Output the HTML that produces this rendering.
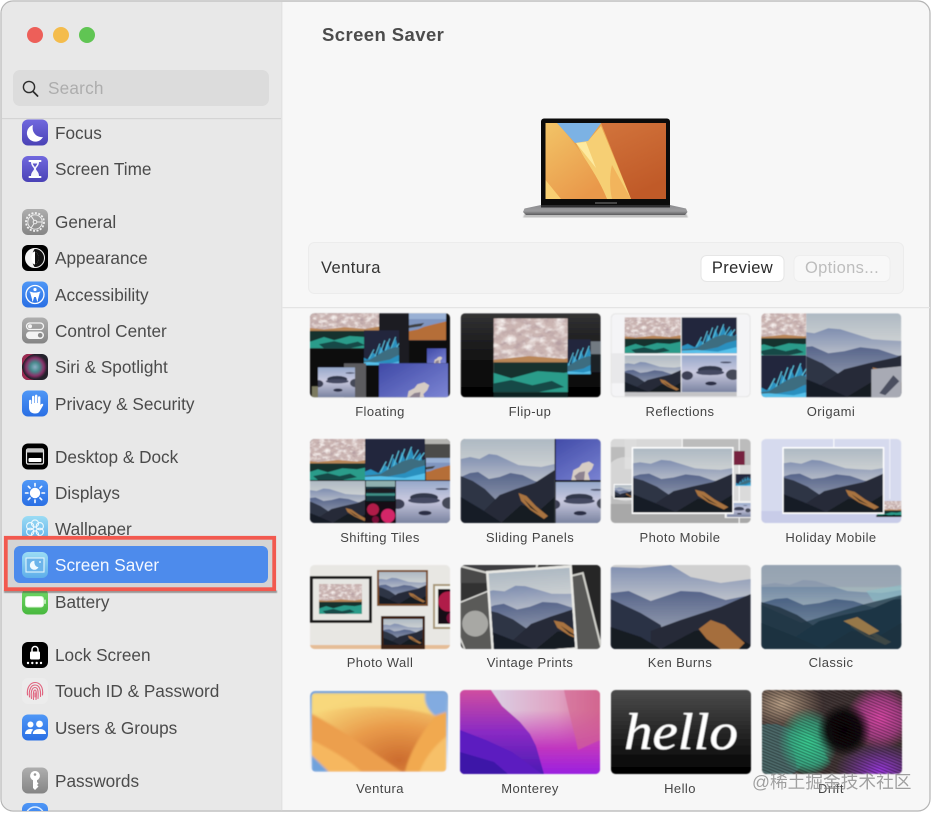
<!DOCTYPE html>
<html><head><meta charset="utf-8"><style>
html,body{margin:0;padding:0;background:#fff;width:934px;height:814px;overflow:hidden}
body{position:relative;font-family:"Liberation Sans","Noto Sans CJK SC",sans-serif}
svg.g{position:absolute;left:0;top:0}
.s{position:absolute;left:55px;height:24px;line-height:24px;font-size:17.2px;color:#4b4b4b;white-space:nowrap}
.t{position:absolute;width:150px;height:16px;line-height:16px;text-align:center;font-size:13px;letter-spacing:.42px;color:#454545;white-space:nowrap}
</style></head><body>
<svg class="g" width="934" height="814" viewBox="0 0 934 814" xmlns="http://www.w3.org/2000/svg">
<defs>
<linearGradient id="sky" x1="0" y1="0" x2="0" y2="1"><stop offset="0" stop-color="#aeb9c3"/><stop offset=".4" stop-color="#d2d5d5"/></linearGradient>
<linearGradient id="far" x1="0" y1="0" x2="0" y2="1"><stop offset="0" stop-color="#7f8eb0"/><stop offset=".42" stop-color="#bcc1cb"/></linearGradient>
<linearGradient id="midg" x1="0" y1="0" x2="0" y2="1"><stop offset="0" stop-color="#56648a"/><stop offset=".6" stop-color="#8c95aa"/></linearGradient>
<linearGradient id="seag" x1="0" y1="0" x2="0" y2="1"><stop offset="0" stop-color="#96a8ca"/><stop offset=".45" stop-color="#c9c9df"/><stop offset="1" stop-color="#7a83a0"/></linearGradient>
<linearGradient id="isg" x1="0" y1="0" x2="1" y2="1"><stop offset="0" stop-color="#3c46a4"/><stop offset="1" stop-color="#7f88d6"/></linearGradient>
<linearGradient id="flipbg" x1="0" y1="0" x2="0" y2="1"><stop offset="0" stop-color="#333335"/><stop offset=".6" stop-color="#0f0f0f"/><stop offset="1" stop-color="#030303"/></linearGradient>
<linearGradient id="hel" x1="0" y1="0" x2="0" y2="1"><stop offset="0" stop-color="#4c4c4c"/><stop offset="1" stop-color="#000"/></linearGradient>
<linearGradient id="sel" x1="0" y1="0" x2="0" y2="1"><stop offset="0" stop-color="#7ea6d8"/><stop offset="1" stop-color="#f8f8fa"/></linearGradient>
<radialGradient id="vt" cx=".65" cy=".85" r=".85"><stop offset="0" stop-color="#cc6c2e"/><stop offset=".5" stop-color="#e89a4a"/><stop offset="1" stop-color="#f7d478"/></radialGradient>
<linearGradient id="vp" x1="0" y1="0" x2=".6" y2="1"><stop offset="0" stop-color="#f2c467"/><stop offset="1" stop-color="#e9984a"/></linearGradient>
<linearGradient id="vo" x1="0" y1="0" x2=".4" y2="1"><stop offset="0" stop-color="#d2743c"/><stop offset="1" stop-color="#c05a28"/></linearGradient>
<linearGradient id="mo" x1="0" y1="0" x2="0" y2="1"><stop offset="0" stop-color="#d04ea0"/><stop offset=".5" stop-color="#8a2ac4"/><stop offset="1" stop-color="#4c1ab4"/></linearGradient>
<linearGradient id="mo2" x1="0" y1="0" x2="1" y2="0"><stop offset=".2" stop-color="#dbd2e6"/><stop offset=".7" stop-color="#e0a2c2"/><stop offset="1" stop-color="#cf6690"/></linearGradient>
<linearGradient id="mo3" x1="0" y1="0" x2="0" y2="1"><stop offset="0" stop-color="#c638b8" stop-opacity="0"/><stop offset=".6" stop-color="#c035c0"/><stop offset="1" stop-color="#9a20e0"/></linearGradient>
<linearGradient id="purp" x1="0" y1="0" x2="0" y2="1"><stop offset="0" stop-color="#7168de"/><stop offset="1" stop-color="#4a42b6"/></linearGradient>
<linearGradient id="grey" x1="0" y1="0" x2="0" y2="1"><stop offset="0" stop-color="#aeaeae"/><stop offset="1" stop-color="#858585"/></linearGradient>
<linearGradient id="blue" x1="0" y1="0" x2="0" y2="1"><stop offset="0" stop-color="#4f97f6"/><stop offset="1" stop-color="#2a6fe4"/></linearGradient>
<linearGradient id="lb" x1="0" y1="0" x2="0" y2="1"><stop offset="0" stop-color="#9bdcf4"/><stop offset="1" stop-color="#5eaeea"/></linearGradient>
<linearGradient id="gr" x1="0" y1="0" x2="0" y2="1"><stop offset="0" stop-color="#72d868"/><stop offset="1" stop-color="#48b83e"/></linearGradient>
<linearGradient id="base" x1="0" y1="0" x2="0" y2="1"><stop offset="0" stop-color="#8c8c8f"/><stop offset=".6" stop-color="#9c9c9e"/><stop offset="1" stop-color="#5c5c5e"/></linearGradient>
<radialGradient id="siri"><stop offset="0" stop-color="#8fb0c8"/><stop offset=".4" stop-color="#468a8c"/><stop offset=".75" stop-color="#8a2f68"/><stop offset="1" stop-color="#22222c"/></radialGradient>
<radialGradient id="dg"><stop offset="0" stop-color="#3fe0a0"/><stop offset=".6" stop-color="#3fc094" stop-opacity=".8"/><stop offset="1" stop-color="#3fc094" stop-opacity="0"/></radialGradient>
<radialGradient id="dp"><stop offset="0" stop-color="#f050b8"/><stop offset=".6" stop-color="#d04aa8" stop-opacity=".8"/><stop offset="1" stop-color="#e84ab0" stop-opacity="0"/></radialGradient>
<radialGradient id="dv"><stop offset="0" stop-color="#a83ef0"/><stop offset="1" stop-color="#9a3ae0" stop-opacity="0"/></radialGradient>
<radialGradient id="dt"><stop offset="0" stop-color="#d0b498"/><stop offset="1" stop-color="#c8a888" stop-opacity="0"/></radialGradient>
<radialGradient id="dk"><stop offset="0" stop-color="#0a0608"/><stop offset=".6" stop-color="#0a0608" stop-opacity=".92"/><stop offset="1" stop-color="#0a0608" stop-opacity="0"/></radialGradient>
<pattern id="st" width="3.6" height="2.8" patternUnits="userSpaceOnUse" patternTransform="rotate(22)"><rect width="3.6" height="1.3" fill="#000" fill-opacity=".5"/></pattern>
<filter id="b" x="-5%" y="-5%" width="110%" height="110%"><feGaussianBlur stdDeviation=".6"/></filter>
<filter id="b1" x="-5%" y="-5%" width="110%" height="110%"><feGaussianBlur stdDeviation="1.2"/></filter>
<filter id="txl" x="0" y="0" width="100%" height="100%"><feTurbulence type="fractalNoise" baseFrequency=".09 .14" numOctaves="3" seed="4"/><feColorMatrix values="0 0 0 0 .96  0 0 0 0 .92  0 0 0 0 .9  2.4 0 0 0 -1.05"/><feComposite in2="SourceGraphic" operator="in"/></filter>
<filter id="txd" x="0" y="0" width="100%" height="100%"><feTurbulence type="fractalNoise" baseFrequency=".11 .16" numOctaves="3" seed="11"/><feColorMatrix values="0 0 0 0 .46  0 0 0 0 .34  0 0 0 0 .36  2.4 0 0 0 -1.1"/><feComposite in2="SourceGraphic" operator="in"/></filter>
<clipPath id="c"><rect width="140" height="84" rx="4.5"/></clipPath>
<clipPath id="listclip"><rect x="0" y="119" width="281" height="692"/></clipPath>
<clipPath id="lscr"><rect x="545.5" y="123" width="120.5" height="76"/></clipPath>

<g id="m"><rect width="140" height="84" fill="url(#sky)"/>
<path d="M0 20L14 18 28 20 42 15 54 16 70 21 86 26 100 27 120 28 140 25V84H0Z" fill="url(#far)"/>
<path d="M0 38L14 34 26 33 42 40 58 38 74 34 92 36 110 42 124 44 140 40V84H0Z" fill="url(#midg)"/>
<path d="M0 37L18 42 36 50 54 62 60 84H0Z" fill="#2e3445"/>
<path d="M34 72L58 56 82 50 110 44 140 31V84H34Z" fill="#282c39"/>
<path d="M0 58L30 70 62 84H0Z" fill="#181b25"/><path d="M60 84L90 66 120 70 140 58V84Z" fill="#171a22"/>
<path d="M86 54L98 57 112 67 130 77 124 80 104 71 90 62Z" fill="#a8733f"/><path d="M94 60L108 69 116 74 104 69Z" fill="#3e3028"/></g>

<g id="sea"><rect width="140" height="84" fill="url(#seag)"/>
<ellipse cx="72" cy="33" rx="28" ry="9" fill="#33374b"/><ellipse cx="72" cy="39" rx="32" ry="6" fill="#444a62"/>
<ellipse cx="20" cy="46" rx="13" ry="10" fill="#3c4054"/><ellipse cx="124" cy="44" rx="16" ry="12" fill="#454958"/>
<ellipse cx="74" cy="64" rx="13" ry="4.500" fill="#2b2e44"/><ellipse cx="108" cy="16" rx="13" ry="2" fill="#474d66"/></g>

<g id="cl"><rect width="140" height="84" fill="#cbb5b2"/>
<rect width="140" height="48" fill="#fff" filter="url(#txd)"/><rect width="140" height="48" fill="#fff" filter="url(#txl)"/>
<path d="M0 44L30 47 70 43 110 46 140 41V52H0Z" fill="#b98656"/>
<rect y="50" width="140" height="34" fill="#14302f"/>
<path d="M0 72L30 62 50 68 80 60 110 62 140 56V84H0Z" fill="#2b9c8a"/><path d="M20 76L50 70 74 76 96 71 110 78 80 84H30Z" fill="#174a47"/></g>

<g id="cy"><rect width="140" height="84" fill="#20263e"/>
<path d="M0 84V70L20 62 36 70 50 54 60 62 66 38 76 52 84 26 92 46 104 20 110 42 122 28 126 46 140 34V84Z" fill="#2a90bf"/>
<path d="M40 68L52 46M54 64L66 32M66 58L78 24M78 52L90 20M90 50L104 16M102 48L118 22M114 50L130 28" stroke="#5fc4df" stroke-width="2.2"/>
<path d="M0 84V76L40 72 66 56 84 46 104 40 120 44 140 42V52L110 60 90 70 50 78 36 84Z" fill="#3d6d80"/>
<path d="M0 78L40 76 90 80 140 68V84H0Z" fill="#55c0ea"/></g>

<g id="is"><rect width="140" height="84" fill="url(#isg)"/>
<path d="M56 84L60 64 72 58 78 50 92 46 102 52 98 62 90 70 94 84Z" fill="#d6ccc4"/><path d="M62 76L72 68 84 66 82 84H66Z" fill="#8d8290"/></g>

<g id="co"><rect width="140" height="84" fill="#7f95bf"/><rect width="140" height="18" fill="#99b0d4"/>
<path d="M0 84V58L40 50 60 42 90 34 140 22V84Z" fill="#b56e38"/><path d="M0 40L30 34 60 30 50 40 10 46Z" fill="#3f3f3f"/></g>

<g id="fl"><rect width="140" height="84" fill="#181018"/><circle cx="40" cy="30" r="24" fill="#b01c48"/><circle cx="100" cy="55" r="28" fill="#d42868"/><circle cx="50" cy="70" r="14" fill="#7a1038"/></g>
<g id="te"><rect width="140" height="84" fill="#17343c"/><rect width="140" height="24" fill="#8fb0b0"/><ellipse cx="70" cy="40" rx="70" ry="10" fill="#1a1a22"/><rect y="52" width="140" height="10" fill="#3f8f86"/></g>

<g id="ken"><rect width="140" height="84" fill="#d0d0d0"/>
<path d="M0 2L30 3 60 0 80 12 110 18 140 14V84H0Z" fill="url(#far)"/>
<path d="M0 28L18 26 40 36 70 26 90 27 115 35 140 30V84H0Z" fill="url(#midg)"/>
<path d="M0 34L30 48 50 60 56 84H0Z" fill="#2c3244"/>
<path d="M40 66L70 55 110 42 140 29V84H40Z" fill="#272b38"/>
<path d="M0 62L30 72 50 84H0Z" fill="#171a24"/><path d="M50 84L84 66 110 62 140 80V84Z" fill="#181a22"/>
<path d="M88 64L100 55 114 60 134 78 128 84 110 84 96 74Z" fill="#a56e3c"/></g>

<g id="ven"><rect width="140" height="84" fill="url(#vt)"/>
<path d="M0 0H120C116 8 120 18 128 24 90 12 40 12 0 22Z" fill="#f7d87c" opacity=".8"/>
<path d="M0 22C30 38 62 62 94 84H0Z" fill="#ec9f4e"/>
<path d="M0 50C20 60 40 72 52 84H0Z" fill="#f6b75e"/>
<path d="M97 84C102 60 120 32 140 12V84Z" fill="#f1a94f"/>
<path d="M112 84C118 68 128 56 140 46V84Z" fill="#f7c068"/>
<path d="M118 0H140V20L128 24C120 18 116 8 118 0Z" fill="#82abe0"/>
<path d="M0 66L18 84H0Z" fill="#6fa2dc"/></g>
</defs>

<!-- window -->
<rect x="1" y="1" width="929" height="810" rx="12" fill="#f7f7f7" stroke="#b4b4b4" stroke-width="1.2"/>
<path d="M13 1.6H281.5V810.4H13A12 12 0 0 1 1.6 798V13A12 12 0 0 1 13 1.6Z" fill="#e8e8e8"/>
<rect x="281" y="2" width="1.4" height="808.6" fill="#e2e2e2"/>
<circle cx="35" cy="35" r="8" fill="#ed5f59"/><circle cx="61" cy="35" r="8" fill="#f4bc4c"/><circle cx="87" cy="35" r="8" fill="#60c553"/>
<rect x="13" y="70" width="256" height="36" rx="7" fill="#dcdcdc"/>
<circle cx="29" cy="87" r="5.6" fill="none" stroke="#2c2c2c" stroke-width="1.4"/><path d="M33 91.4L37.6 96" stroke="#2c2c2c" stroke-width="1.7" stroke-linecap="round"/>
<rect x="2" y="118" width="279" height="1.2" fill="#d4d4d4"/>

<!-- sidebar icons -->
<g clip-path="url(#listclip)">
<g transform="translate(22 119.5)"><rect width="26" height="26" rx="6" fill="url(#purp)"/><path d="M11 5.500A8.500 8.500 0 1 0 21 17.500C15 18.500 9 13 11 5.500Z" fill="#fff"/></g>
<g transform="translate(22 156)"><rect width="26" height="26" rx="6" fill="url(#purp)"/><path d="M7.500 5H18.500M7.500 21H18.500" stroke="#fff" stroke-width="2" stroke-linecap="round"/><path d="M9 6C9 10 12 11.500 12 13S9 16 9 20H17C17 16 14 14.500 14 13S17 10 17 6Z" fill="#fff" fill-opacity=".95"/><path d="M10.800 7.500H15.200C14.800 9.500 13 10.500 13 11.500 13 10.500 11.200 9.500 10.800 7.500Z" fill="#5a52c6"/></g>
<g transform="translate(22 209)"><rect width="26" height="26" rx="6" fill="url(#grey)"/><circle cx="13" cy="13" r="9" fill="none" stroke="#f2f2f2" stroke-width="1.800" stroke-dasharray="2 1.500"/><circle cx="13" cy="13" r="7.200" fill="none" stroke="#eee" stroke-width=".9"/><circle cx="13" cy="13" r="1.800" fill="none" stroke="#eee"/><path d="M14.800 13H20M12 11.500L9 6.800M12 14.500L9 19.200" stroke="#eee" stroke-width="1"/></g>
<g transform="translate(22 245)"><rect width="26" height="26" rx="6" fill="#000"/><circle cx="13" cy="13" r="9.500" fill="#111" stroke="#f4f4f4" stroke-width="1"/><path d="M13 3.500A9.500 9.500 0 0 0 13 22.500C9 18 9 8 13 3.500Z" fill="#f4f4f4"/><path d="M9 13C9 9 11 6.500 13 6.500V19.500C11 19.500 9 17 9 13Z" fill="#f4f4f4"/><ellipse cx="13" cy="13" rx="3.600" ry="6" fill="#fff"/><path d="M13 7A3.600 6 0 0 1 13 19Z" fill="#111"/></g>
<g transform="translate(22 281.500)"><rect width="26" height="26" rx="6" fill="url(#blue)"/><circle cx="13" cy="13" r="9" fill="none" stroke="#fff" stroke-width="1.300"/><circle cx="13" cy="8" r="1.600" fill="#fff"/><path d="M8 10.500L11.800 11.500V15L10.500 19.500M18 10.500L14.200 11.500V15L15.500 19.500M11.800 11.500H14.200V15H11.800Z" fill="#fff" stroke="#fff" stroke-width=".9" stroke-linecap="round" stroke-linejoin="round"/></g>
<g transform="translate(22 317.500)"><rect width="26" height="26" rx="6" fill="url(#grey)"/><rect x="4.500" y="5.500" width="17" height="6.500" rx="3.250" fill="none" stroke="#f4f4f4" stroke-width="1.300"/><circle cx="8" cy="8.750" r="2" fill="#f4f4f4"/><rect x="4" y="14" width="18" height="7.500" rx="3.750" fill="#f4f4f4"/><circle cx="18.200" cy="17.750" r="2.300" fill="#8a8a8a"/></g>
<g transform="translate(22 354)"><rect width="26" height="26" rx="6" fill="#25222c"/><circle cx="13" cy="13" r="12" fill="url(#siri)" filter="url(#b)"/><path d="M0 12C3 3 8 1 12 0H6A6 6 0 0 0 0 6ZM0 14C2 22 6 25 12 26H6A6 6 0 0 1 0 20Z" fill="#9c2a52"/></g>
<g transform="translate(22 390.500)"><rect width="26" height="26" rx="6" fill="url(#blue)"/><path d="M7 10.500A1.200 1.200 0 0 1 9.400 10.500V13.500H10V6.500A1.200 1.200 0 0 1 12.400 6.500V12.500H13V5.300A1.200 1.200 0 0 1 15.400 5.300V12.500H16V7A1.200 1.200 0 0 1 18.400 7V14.500L19 13.800C20 12.500 22 13.500 21 15L17.500 21C16.500 22.500 15 23 13 23 9 23 7 20.500 7 17Z" fill="#fff"/></g>
<g transform="translate(22 443.500)"><rect width="26" height="26" rx="6" fill="#000"/><rect x="4.500" y="5.500" width="17" height="15" rx="1.500" fill="none" stroke="#eee" stroke-width="1.200"/><rect x="4.500" y="5.500" width="17" height="3.500" fill="#c8c8c8"/><rect x="6.500" y="14.500" width="13" height="4" rx="1" fill="#fff"/></g>
<g transform="translate(22 480)"><rect width="26" height="26" rx="6" fill="url(#blue)"/><circle cx="13" cy="13" r="5.200" fill="#fff"/><path d="M13 3.500V6M13 20V22.500M3.500 13H6M20 13H22.500M6.300 6.300L8 8M18 18L19.700 19.700M6.300 19.700L8 18M18 8L19.700 6.300" stroke="#fff" stroke-width="1.600" stroke-linecap="round"/></g>
<g transform="translate(22 516)"><rect width="26" height="26" rx="6" fill="url(#lb)"/><g fill="none" stroke="#eef9fe" stroke-width="1.100"><circle cx="13" cy="7.500" r="3.600"/><circle cx="13" cy="18.500" r="3.600"/><circle cx="8.200" cy="10.200" r="3.600"/><circle cx="17.800" cy="10.200" r="3.600"/><circle cx="8.200" cy="15.800" r="3.600"/><circle cx="17.800" cy="15.800" r="3.600"/><circle cx="13" cy="13" r="2"/></g></g>
<g transform="translate(22 588.500)"><rect width="26" height="26" rx="6" fill="url(#gr)"/><rect x="3.500" y="8" width="18" height="10.500" rx="2.500" fill="#fff" stroke="#d8f5d4"/><rect x="22.300" y="11" width="1.400" height="4.500" rx=".7" fill="#e6fae2"/></g>
<g transform="translate(22 642)"><rect width="26" height="26" rx="6" fill="#000"/><path d="M10 9.500V7.500A3 3 0 0 1 16 7.500V9.500" fill="none" stroke="#fff" stroke-width="1.500"/><rect x="8" y="9.500" width="10" height="8" rx="1.200" fill="#fff"/><g fill="#fff"><circle cx="6" cy="21" r="1.200"/><circle cx="10.300" cy="21" r="1.200"/><circle cx="14.700" cy="21" r="1.200"/><circle cx="19" cy="21" r="1.200"/></g></g>
<g transform="translate(22 678)"><rect width="26" height="26" rx="6" fill="#ececec"/><g fill="none" stroke="#e0607c" stroke-width="1.100" stroke-linecap="round"><path d="M5.500 17C4.500 10 8 4.500 13 4.500S21.500 9 20.500 17"/><path d="M7.500 19C6.500 12 9 7 13 7S19 11 18.500 18.500"/><path d="M9.500 20.500C8.500 14 10 9.500 13 9.500S16.500 13 16 20.500"/><path d="M11.500 21.500C11 16 11.500 12 13 12S14.500 16 14 21.500"/><path d="M13 15V19"/></g></g>
<g transform="translate(22 714.500)"><rect width="26" height="26" rx="6" fill="url(#blue)"/><g fill="#fff"><circle cx="8.500" cy="10" r="3"/><circle cx="17.500" cy="9.500" r="3.400"/><path d="M3 19.500C3 16 6 14.500 8.500 14.500 9.500 14.500 10.500 14.800 11.200 15.200 9.800 16.300 9.200 17.700 9.200 19.500Z"/><path d="M10.800 19.500C10.800 16 14 14.500 17.500 14.500S24 16 24 19.500Z"/></g></g>
<g transform="translate(22 767.500)"><rect width="26" height="26" rx="6" fill="url(#grey)"/><path d="M13 3.500A4.800 4.800 0 0 1 15 12.700V14.500L16.500 16 15 17.500 16.500 19 13 22.500 11 20.500V12.700A4.800 4.800 0 0 1 13 3.500Z" fill="#fff"/><circle cx="13" cy="7" r="1.300" fill="#999"/></g>
<g transform="translate(22 803)"><rect width="26" height="26" rx="6" fill="url(#blue)"/><circle cx="13" cy="13" r="9" fill="none" stroke="#dfeeff" stroke-width="1.400"/></g>
</g>

<!-- highlight -->
<rect x="6" y="538" width="268" height="51" fill="#d4d4d4"/>
<rect x="4" y="590.500" width="273" height="2.500" fill="#444" opacity=".5" filter="url(#b)"/>
<rect x="5.800" y="537.800" width="268.400" height="51.400" fill="none" stroke="#f2594f" stroke-width="3.800"/>
<rect x="14" y="546" width="254" height="37" rx="6" fill="#4d8bec"/>
<g transform="translate(22 552)"><rect width="26" height="26" rx="6" fill="url(#lb)"/><rect x="4" y="6" width="18" height="14" fill="#6cb4ea" stroke="#e2f5fd" stroke-width="1.100"/><path d="M12.500 8.800A4.500 4.500 0 1 0 16.500 15C13.800 15.300 11.800 12.300 12.500 8.800Z" fill="#f0faff"/><circle cx="18" cy="10" r=".9" fill="#fff"/></g>

<!-- laptop -->
<path d="M525 213H686L688 217.500H523Z" fill="#9a9a9a" opacity=".6" filter="url(#b)"/>
<path d="M544 118.500H667A3 3 0 0 1 670 121.500V206H541V121.500A3 3 0 0 1 544 118.500Z" fill="#0b0b0b"/>
<g clip-path="url(#lscr)">
<rect x="545.500" y="123" width="121" height="76" fill="#e9a34f"/>
<path d="M601 123H666V199H631Z" fill="url(#vo)"/>
<path d="M570 132L588 141 601 126 631 199H607Z" fill="#f6cf74"/>
<path d="M612 165L631 199H612C609 186 610 173 612 165Z" fill="#f2b45c"/>
<path d="M545.500 123H557C572 138 598 175 607 199H545.500Z" fill="url(#vp)"/>
<path d="M545.500 180L561 199H545.500Z" fill="#f8cf72"/>
<path d="M557 123H601L588 141 575 143Z" fill="#7cb2e4"/>
<path d="M576 143L586 142 596 168Z" fill="#fdeaa0"/>
</g>
<rect x="595" y="202" width="22" height="2" fill="#444"/>
<path d="M541 205H670L686 208.500 687.500 212 685 215H526L523 212 524.500 208.500Z" fill="url(#base)"/>
<rect x="541" y="205" width="129" height="2.500" fill="#2e2e30"/>

<!-- options panel -->
<rect x="308.500" y="242.500" width="595" height="51" rx="6" fill="#f3f3f3" stroke="#ececec"/>
<rect x="701" y="255.500" width="83" height="26" rx="5.500" fill="#fff" stroke="#e6e6e6"/>
<rect x="794" y="255.500" width="96" height="26" rx="5.500" fill="#f8f8f8" stroke="#eeeeee"/>
<rect x="282.400" y="307" width="647.600" height="1.300" fill="#e4e4e4"/>

<!-- thumbs -->
<g filter="url(#b)">
<!-- Floating -->
<svg x="310" y="313.300" width="140" height="84" viewBox="0 0 140 84"><g clip-path="url(#c)"><rect width="140" height="84" fill="#08080a"/><rect x="69" width="30" height="60" fill="#1b1b20"/>
<svg x="0" y="-8" width="69" height="43" viewBox="0 0 140 84" preserveAspectRatio="xMidYMid slice"><use href="#cl"/></svg>
<svg x="99" y="0" width="37" height="27" viewBox="0 0 140 84" preserveAspectRatio="xMidYMid slice"><use href="#co"/></svg>
<svg x="54" y="17" width="35" height="35" viewBox="0 0 140 84" preserveAspectRatio="xMidYMid slice"><use href="#cy"/></svg>
<svg x="117" y="35" width="19" height="15" viewBox="0 0 140 84" preserveAspectRatio="xMidYMid slice"><use href="#is"/></svg>
<rect x="34" y="50" width="22" height="34" fill="#5b5b5f"/>
<svg x="8" y="54" width="37" height="30" viewBox="0 0 140 84" preserveAspectRatio="xMidYMid slice"><use href="#sea"/></svg>
<rect x="2" y="73" width="6" height="11" fill="#7c7a5e"/>
<svg x="69" y="50" width="69" height="34" viewBox="0 0 140 84" preserveAspectRatio="xMidYMid slice"><use href="#is"/></svg>
</g></svg>
<!-- Flip-up -->
<svg x="460.700" y="313.300" width="140" height="84" viewBox="0 0 140 84"><g clip-path="url(#c)"><rect width="140" height="84" fill="url(#flipbg)"/>
<svg x="33" y="5" width="74" height="74" viewBox="30 0 84 84" preserveAspectRatio="none"><use href="#cl"/></svg>
<rect x="33" y="79" width="74" height="5" fill="#0d2422"/>
<svg x="107" y="26" width="23" height="35" viewBox="50 0 60 84" preserveAspectRatio="xMidYMid slice"><use href="#cy"/></svg>
<rect x="130" y="28" width="10" height="13" fill="#727a82"/><rect x="130" y="41" width="10" height="18" fill="#1f2126"/>
</g></svg>
<!-- Reflections -->
<svg x="610.700" y="313.300" width="140" height="84" viewBox="0 0 140 84"><g clip-path="url(#c)"><rect width="140" height="84" fill="#f4f4f6"/><rect x="0" y="40" width="14" height="30" fill="#e8e8ea"/>
<svg x="14" y="4" width="56" height="36" viewBox="0 0 140 84" preserveAspectRatio="xMidYMid slice"><use href="#cl"/></svg>
<svg x="71" y="4" width="55" height="36" viewBox="0 0 140 84" preserveAspectRatio="xMidYMid slice"><use href="#cy"/></svg>
<svg x="14" y="42" width="56" height="37" viewBox="0 0 140 84" preserveAspectRatio="xMidYMid slice"><use href="#m"/></svg>
<svg x="71" y="42" width="55" height="37" viewBox="0 0 140 84" preserveAspectRatio="xMidYMid slice"><use href="#sea"/></svg>
<rect x="14" y="79" width="112" height="5" fill="#c4c4c6"/>
</g><rect x=".5" y=".5" width="139" height="83" rx="4.500" fill="none" stroke="#e4e4e4"/></svg>
<!-- Origami -->
<svg x="761.300" y="313.300" width="140" height="84" viewBox="0 0 140 84"><g clip-path="url(#c)">
<svg x="0" y="0" width="45" height="42" viewBox="0 0 140 84" preserveAspectRatio="xMidYMid slice"><use href="#cl"/></svg>
<svg x="0" y="42" width="45" height="42" viewBox="0 0 140 84" preserveAspectRatio="xMidYMid slice"><use href="#cy"/></svg>
<svg x="45" y="0" width="95" height="84" viewBox="20 0 95 84" preserveAspectRatio="xMidYMid slice"><use href="#m"/></svg>
<path d="M110 56L140 53V84H110Z" fill="#a8aab4"/><path d="M118 80L132 62 138 68 124 82Z" fill="#4c5060"/>
</g></svg>
<!-- Shifting Tiles -->
<svg x="310" y="439" width="140" height="84" viewBox="0 0 140 84"><g clip-path="url(#c)"><rect width="140" height="84" fill="#0c0c0e"/>
<svg x="0" y="0" width="55" height="41" viewBox="0 0 140 84" preserveAspectRatio="xMidYMid slice"><use href="#cl"/></svg>
<svg x="55" y="0" width="60" height="41" viewBox="0 0 140 84" preserveAspectRatio="xMidYMid slice"><use href="#cy"/></svg>
<rect x="115" width="25" height="19" fill="#4c4c48"/><rect x="115" width="25" height="5" fill="#b4b4b0"/>
<svg x="116" y="19" width="24" height="22" viewBox="0 0 140 84" preserveAspectRatio="xMidYMid slice"><use href="#co"/></svg>
<svg x="0" y="42" width="55" height="42" viewBox="0 0 140 84" preserveAspectRatio="xMidYMid slice"><use href="#m"/></svg>
<svg x="56" y="42" width="29" height="20" viewBox="0 0 140 84" preserveAspectRatio="xMidYMid slice"><use href="#te"/></svg>
<svg x="56" y="63" width="29" height="21" viewBox="0 0 140 84" preserveAspectRatio="xMidYMid slice"><use href="#fl"/></svg>
<svg x="86" y="42" width="54" height="42" viewBox="0 0 140 84" preserveAspectRatio="xMidYMid slice"><use href="#sea"/></svg>
</g></svg>
<!-- Sliding Panels -->
<svg x="460.700" y="439" width="140" height="84" viewBox="0 0 140 84"><g clip-path="url(#c)"><rect width="140" height="84" fill="#0c0c0e"/>
<svg x="0" y="0" width="94" height="84" viewBox="0 0 140 84" preserveAspectRatio="none"><use href="#m"/></svg>
<svg x="95" y="0" width="45" height="41" viewBox="0 0 140 84" preserveAspectRatio="xMidYMid slice"><use href="#is"/></svg>
<svg x="95" y="43" width="45" height="41" viewBox="0 0 140 84" preserveAspectRatio="xMidYMid slice"><use href="#sea"/></svg>
</g></svg>
<!-- Photo Mobile -->
<svg x="610.700" y="439" width="140" height="84" viewBox="0 0 140 84"><g clip-path="url(#c)"><rect width="140" height="84" fill="#bcbcbc"/><rect width="71" height="8" fill="#d8d8d8"/><rect x="14" width="12" height="30" fill="#dcdcdc"/><ellipse cx="15" cy="40" rx="22" ry="22" fill="#e0e0e0" opacity=".7"/><rect y="65" width="140" height="19" fill="#a8a8a8"/><rect x="122" y="26" width="18" height="40" fill="#dadada"/><rect x="71" y="0" width="1" height="8" fill="#fff"/><rect x="128" width="1" height="84" fill="#fff"/>
<rect x="3" y="45" width="18" height="15" fill="#fff"/><svg x="4" y="46" width="17" height="13" viewBox="0 0 140 84" preserveAspectRatio="xMidYMid slice"><use href="#m"/></svg>
<rect x="123" y="12" width="11" height="14" fill="#77223f"/>
<svg x="125" y="35" width="15" height="12" viewBox="0 0 140 84" preserveAspectRatio="xMidYMid slice"><use href="#cy"/></svg>
<rect x="114" y="62" width="26" height="17" fill="#f2f2f2"/><svg x="116" y="64" width="24" height="14" viewBox="0 0 140 84" preserveAspectRatio="xMidYMid slice"><use href="#sea"/></svg>
<rect x="21" y="8" width="102" height="67" fill="#fff"/><svg x="22.500" y="9.500" width="99" height="64" viewBox="0 0 140 84" preserveAspectRatio="xMidYMid slice"><use href="#m"/></svg>
</g></svg>
<!-- Holiday Mobile -->
<svg x="761.300" y="439" width="140" height="84" viewBox="0 0 140 84"><g clip-path="url(#c)"><rect width="140" height="84" fill="#d6daee"/><rect x="72" width="1" height="8" fill="#fff"/><rect x="128" width="1" height="60" fill="#f2f2fa"/><rect y="72" width="140" height="12" fill="#c8cce8"/>
<svg x="116" y="62" width="24" height="16" viewBox="0 0 140 84" preserveAspectRatio="xMidYMid slice"><use href="#cl"/></svg><rect x="115" y="76" width="25" height="2" fill="#111"/>
<rect x="21" y="8" width="102" height="67" fill="#fff"/><svg x="22.500" y="9.500" width="99" height="64" viewBox="0 0 140 84" preserveAspectRatio="xMidYMid slice"><use href="#m"/></svg>
</g></svg>
<!-- Photo Wall -->
<svg x="310" y="565" width="140" height="84" viewBox="0 0 140 84"><g clip-path="url(#c)"><rect width="140" height="84" fill="#e8e7e3"/><rect y="80" width="140" height="4" fill="#e5bd97"/>
<rect x="0" y="11" width="62" height="47" fill="#1c1c1e"/><rect x="3" y="14" width="56" height="41" fill="#e6e6e2"/>
<svg x="9" y="19" width="43" height="30" viewBox="0 0 140 84" preserveAspectRatio="xMidYMid slice"><use href="#cl"/></svg>
<rect x="67" y="5" width="51" height="36" fill="#7a4e2c"/><svg x="69" y="7" width="47" height="32" viewBox="0 0 140 84" preserveAspectRatio="xMidYMid slice"><use href="#m"/></svg>
<rect x="71" y="51" width="44" height="33" fill="#3c2416"/><svg x="73.500" y="54" width="39" height="26" viewBox="0 0 140 84" preserveAspectRatio="xMidYMid slice"><use href="#m"/></svg>
<rect x="123" y="19" width="17" height="45" fill="#a89878"/><rect x="125" y="21" width="15" height="41" fill="#f0f0ea"/><svg x="128" y="24" width="12" height="35" viewBox="0 0 60 84" preserveAspectRatio="xMidYMid slice"><use href="#fl"/></svg>
</g></svg>
<!-- Vintage Prints -->
<svg x="460.700" y="565" width="140" height="84" viewBox="0 0 140 84"><g clip-path="url(#c)"><rect width="140" height="84" fill="#333"/><rect x="110" width="30" height="84" fill="#282828"/><rect width="50" height="18" fill="#484848"/>
<g transform="rotate(-22 25 50)"><rect x="-8" y="28" width="52" height="58" fill="#d6d6d2"/><rect x="-6.500" y="29.500" width="49" height="55" fill="#5a5a58"/><circle cx="12" cy="54" r="13" fill="#a8a8a4"/></g>
<g transform="rotate(14 70 30)"><rect x="-10" y="-30" width="80" height="50" fill="#cfcfcb"/><rect x="-8" y="-28" width="76" height="46" fill="#3e3e40"/></g>
<g transform="rotate(-14 115 50)"><rect x="95" y="10" width="38" height="86" fill="#cfcfc9"/><rect x="97" y="12" width="34" height="82" fill="#595956"/></g>
<g transform="rotate(-4 70 44)"><rect x="28" y="3" width="86" height="84" fill="#e8e8e4"/><svg x="30.500" y="5.500" width="81" height="80" viewBox="10 0 100 84" preserveAspectRatio="none"><use href="#m"/></svg></g>
</g></svg>
<!-- Ken Burns -->
<svg x="610.700" y="565" width="140" height="84" viewBox="0 0 140 84"><g clip-path="url(#c)"><use href="#ken"/></g></svg>
<!-- Classic -->
<svg x="761.300" y="565" width="140" height="84" viewBox="0 0 140 84"><g clip-path="url(#c)"><use href="#m"/><rect width="140" height="84" fill="#1f5a6e" opacity=".22"/><path d="M0 0H140V22H0Z" fill="#98a2b2" opacity=".7"/><path d="M105 26L140 20V34L112 36Z" fill="#8cc0c8" opacity=".6"/><path d="M0 40L40 58 100 40 140 30V84H0Z" fill="#1c3644" opacity=".7"/><path d="M82 56L96 52 118 66 108 70Z" fill="#97784a"/></g></svg>
<!-- Ventura -->
<svg x="309" y="690" width="141" height="84.500" viewBox="0 0 141 84.500"><rect x="1" y="1" width="138" height="82.500" rx="5" fill="url(#sel)"/><svg x="2.500" y="3" width="135" height="79" viewBox="0 0 140 84" preserveAspectRatio="none"><g clip-path="url(#c)"><g filter="url(#b1)"><use href="#ven"/></g></g></svg></svg>
<!-- Monterey -->
<svg x="460" y="690" width="140" height="84" viewBox="0 0 140 84"><g clip-path="url(#c)"><rect width="140" height="84" fill="url(#mo2)"/><rect y="20" width="140" height="64" fill="url(#mo3)"/>
<path d="M104 0H140V50L118 60C114 40 108 20 104 0Z" fill="#d4658f" opacity=".6"/>
<path d="M0 0H31L42 16 60 32 70 44 76 56 84 84H0Z" fill="url(#mo)"/>
<path d="M0 40L26 50 52 62 82 84H0Z" fill="#5c1ec0"/><path d="M0 62L34 72 48 84H0Z" fill="#3d18a8"/></g></svg>
<!-- Hello -->
<svg x="611" y="690" width="140" height="84" viewBox="0 0 140 84"><g clip-path="url(#c)"><rect width="140" height="84" fill="url(#hel)"/><text x="70" y="59" text-anchor="middle" font-family="Liberation Serif" font-style="italic" font-size="52" fill="#fff" stroke="#fff" stroke-width=".3" textLength="114" lengthAdjust="spacingAndGlyphs">hello</text></g></svg>
<!-- Drift -->
<svg x="762" y="690" width="140" height="84" viewBox="0 0 140 84"><g clip-path="url(#c)"><rect width="140" height="84" fill="#4a3c3c"/>
<ellipse cx="20" cy="14" rx="42" ry="28" fill="url(#dt)"/><ellipse cx="8" cy="62" rx="36" ry="28" fill="#557474"/><path d="M18 36C34 30 50 42 58 56 66 68 72 78 76 84H34C36 64 28 50 18 36Z" fill="url(#dg)"/><ellipse cx="46" cy="52" rx="30" ry="34" fill="url(#dg)"/><ellipse cx="118" cy="28" rx="34" ry="32" fill="url(#dp)"/><ellipse cx="118" cy="80" rx="45" ry="28" fill="url(#dv)"/>
<ellipse cx="82" cy="40" rx="27" ry="27" fill="url(#dk)"/>
<rect width="140" height="84" fill="url(#st)"/></g></svg>
</g>
</svg>

<div class="s" style="left:48px;top:76px;color:#adadad;letter-spacing:.2px">Search</div>
<div class="s" style="top:121px">Focus</div>
<div class="s" style="top:157px">Screen Time</div>
<div class="s" style="top:210px">General</div>
<div class="s" style="top:246px">Appearance</div>
<div class="s" style="top:283px">Accessibility</div>
<div class="s" style="top:319px">Control Center</div>
<div class="s" style="top:355px">Siri &amp; Spotlight</div>
<div class="s" style="top:392px">Privacy &amp; Security</div>
<div class="s" style="top:445px">Desktop &amp; Dock</div>
<div class="s" style="top:481px">Displays</div>
<div class="s" style="top:517px;height:19px;overflow:hidden">Wallpaper</div>
<div class="s" style="top:553px;color:#f4f8ff">Screen Saver</div>
<div class="s" style="top:590px">Battery</div>
<div class="s" style="top:643px">Lock Screen</div>
<div class="s" style="top:679px">Touch ID &amp; Password</div>
<div class="s" style="top:716px">Users &amp; Groups</div>
<div class="s" style="top:769px">Passwords</div>

<div style="position:absolute;left:322px;top:23px;height:24px;line-height:24px;font-size:18.5px;font-weight:bold;color:#4c4c4c;letter-spacing:.42px">Screen Saver</div>
<div style="position:absolute;left:321px;top:256px;height:24px;line-height:24px;font-size:16.5px;color:#333;letter-spacing:.42px">Ventura</div>
<div style="position:absolute;left:701px;top:256px;width:83px;text-align:center;height:24px;line-height:24px;font-size:16.5px;color:#2a2a2a;letter-spacing:.35px">Preview</div>
<div style="position:absolute;left:794px;top:256px;width:96px;text-align:center;height:24px;line-height:24px;font-size:16.5px;color:#bdbdbd;letter-spacing:.35px">Options...</div>

<div class="t" style="left:305px;top:404px">Floating</div>
<div class="t" style="left:455px;top:404px">Flip-up</div>
<div class="t" style="left:605px;top:404px">Reflections</div>
<div class="t" style="left:756px;top:404px">Origami</div>
<div class="t" style="left:305px;top:530px">Shifting Tiles</div>
<div class="t" style="left:455px;top:530px">Sliding Panels</div>
<div class="t" style="left:605px;top:530px">Photo Mobile</div>
<div class="t" style="left:756px;top:530px">Holiday Mobile</div>
<div class="t" style="left:305px;top:655px">Photo Wall</div>
<div class="t" style="left:455px;top:655px">Vintage Prints</div>
<div class="t" style="left:605px;top:655px">Ken Burns</div>
<div class="t" style="left:756px;top:655px">Classic</div>
<div class="t" style="left:305px;top:781px">Ventura</div>
<div class="t" style="left:455px;top:781px">Monterey</div>
<div class="t" style="left:605px;top:781px">Hello</div>
<div class="t" style="left:756px;top:781px">Drift</div>
<div style="position:absolute;left:752px;top:770px;height:24px;line-height:24px;font-size:17.7px;color:rgba(125,125,125,.72);white-space:nowrap;text-shadow:0 0 2px rgba(255,255,255,.5)">@稀土掘金技术社区</div>
</body></html>
